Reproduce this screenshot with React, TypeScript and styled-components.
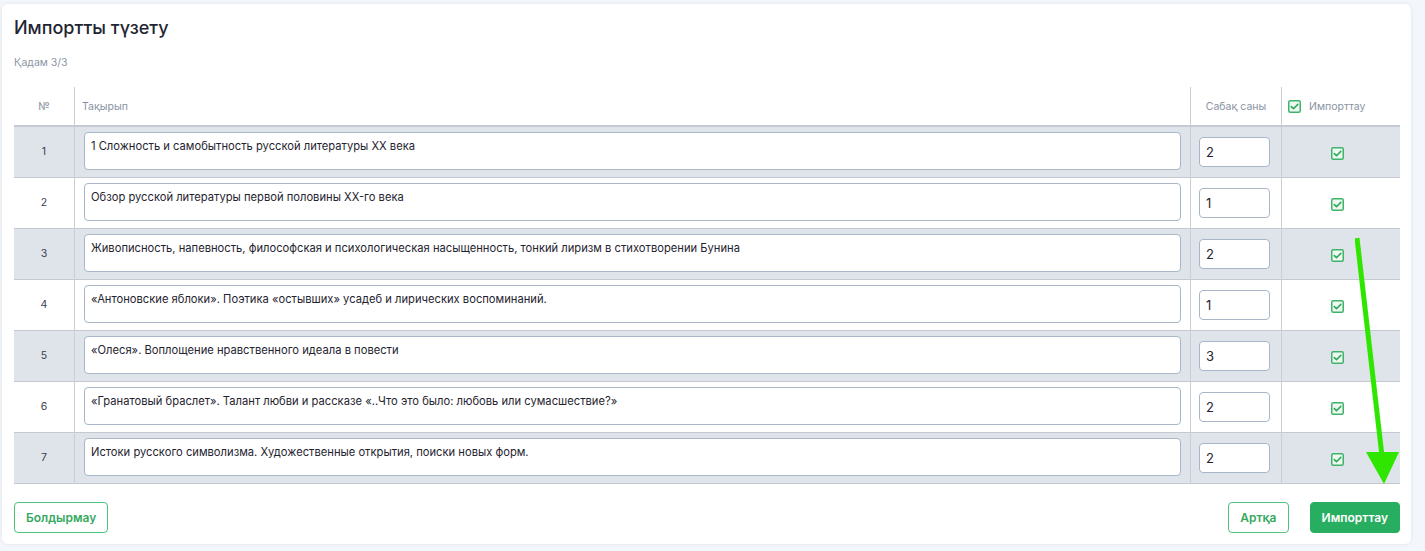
import { useState } from "react";
import { styled, createGlobalStyle } from "styled-components";

interface Lesson {
  id: number;
  title: string;
  hours: string;
  checked: boolean;
}

const initialLessons: Lesson[] = [
  { id: 1, title: "1 Сложность и самобытность русской литературы XX века", hours: "2", checked: true },
  { id: 2, title: "Обзор русской литературы первой половины XX-го века", hours: "1", checked: true },
  {
    id: 3,
    title:
      "Живописность, напевность, философская и психологическая насыщенность, тонкий лиризм в стихотворении Бунина",
    hours: "2",
    checked: true,
  },
  {
    id: 4,
    title: "«Антоновские яблоки». Поэтика «остывших» усадеб и лирических воспоминаний.",
    hours: "1",
    checked: true,
  },
  { id: 5, title: "«Олеся». Воплощение нравственного идеала в повести", hours: "3", checked: true },
  {
    id: 6,
    title: "«Гранатовый браслет». Талант любви и рассказе «..Что это было: любовь или сумасшествие?»",
    hours: "2",
    checked: true,
  },
  {
    id: 7,
    title: "Истоки русского символизма. Художественные открытия, поиски новых форм.",
    hours: "2",
    checked: true,
  },
];

const CheckIcon = () => (
  <svg width="13" height="13" viewBox="0 0 13 13">
    <rect x="0.75" y="0.75" width="11.5" height="11.5" rx="1.5" fill="#eef8f1" stroke="#3fb36b" strokeWidth="1.5" />
    <path d="M3.3 6.6 L5.5 8.7 L9.8 4.4" fill="none" stroke="#2faa5c" strokeWidth="1.6" strokeLinecap="round" strokeLinejoin="round" />
  </svg>
);

export default function App() {
  const [lessons, setLessons] = useState(initialLessons);

  const toggle = (id: number) =>
    setLessons((prev) => prev.map((l) => (l.id === id ? { ...l, checked: !l.checked } : l)));

  return (
    <>
      <GlobalStyle />
      <Page>
        <Card>
          <Title>Импортты түзету</Title>
          <Divider />
          <Step>Қадам 3/3</Step>

          <Table>
            <thead>
              <tr>
                <HeadCell $align="center" $width={46}>№</HeadCell>
                <HeadCell>Тақырып</HeadCell>
                <HeadCell $align="center" $width={76}>Сабақ саны</HeadCell>
                <HeadCell $width={104}>
                  <HeadCheck>
                    <CheckIcon />
                    <span>Импорттау</span>
                  </HeadCheck>
                </HeadCell>
              </tr>
            </thead>
            <tbody>
              {lessons.map((lesson, i) => (
                <Row key={`lesson-${lesson.id}`} $striped={i % 2 === 0}>
                  <NumCell>{lesson.id}</NumCell>
                  <TitleCell>
                    <TitleInput value={lesson.title} readOnly />
                  </TitleCell>
                  <HoursCell>
                    <HoursInput value={lesson.hours} readOnly />
                  </HoursCell>
                  <CheckCell onClick={() => toggle(lesson.id)}>
                    {lesson.checked && <CheckIcon />}
                  </CheckCell>
                </Row>
              ))}
            </tbody>
          </Table>

          <Footer>
            <OutlineButton>Болдырмау</OutlineButton>
            <FooterRight>
              <OutlineButton>Артқа</OutlineButton>
              <PrimaryButton>Импорттау</PrimaryButton>
            </FooterRight>
          </Footer>

          <Arrow width="60" height="260" viewBox="0 0 60 260">
            <line x1="2" y1="2" x2="27" y2="220" stroke="#2ee600" strokeWidth="5" />
            <polygon points="11,216 44,216 29,248" fill="#2ee600" />
          </Arrow>
        </Card>
      </Page>
    </>
  );
}

const GlobalStyle = createGlobalStyle`
  html, body {
    margin: 0;
    padding: 0;
    background: #f3f6fa;
    font-family: Inter, "Noto Sans", "DejaVu Sans", sans-serif;
  }
`;

const Page = styled.div`
  width: 1425px;
  height: 551px;
  padding: 4px 14px 7px 2px;
  box-sizing: border-box;
`;

const Card = styled.div`
  position: relative;
  height: 100%;
  box-sizing: border-box;
  background: #ffffff;
  border-radius: 6px;
  box-shadow: 0 0 4px rgba(30, 50, 90, 0.08);
  padding: 13px 11px 12px 12px;
  display: flex;
  flex-direction: column;
`;

const Title = styled.h1`
  margin: 0;
  font-size: 18px;
  font-weight: 500;
  color: #1f2532;
  line-height: 21px;
`;

const Divider = styled.div`
  height: 1px;
  background: #cfd5dc;
  margin-top: 11px;
`;

const Step = styled.div`
  margin-top: 7px;
  font-size: 10.5px;
  color: #8c95a3;
  line-height: 13px;
`;

const Table = styled.table`
  width: 100%;
  margin-top: 18px;
  border-collapse: collapse;
  table-layout: fixed;
`;

const HeadCell = styled.th<{ $align?: string; $width?: number }>`
  height: 38px;
  padding: 0 7px;
  text-align: ${(p) => p.$align ?? "left"};
  width: ${(p) => (p.$width ? `${p.$width}px` : "auto")};
  font-size: 10.5px;
  font-weight: 400;
  color: #8a93a3;
  border-bottom: 2px solid #c6cbd3;
  border-left: 1px solid #c9cfd7;

  &:first-child {
    border-left: none;
  }
`;

const HeadCheck = styled.div`
  display: flex;
  align-items: center;
  gap: 8px;

  & svg {
    margin-left: -1px;
  }
`;

const Row = styled.tr<{ $striped: boolean }>`
  height: 51px;
  background: ${(p) => (p.$striped ? "#dfe3ea" : "#ffffff")};
  border-bottom: 1px solid #c4c9d1;

  & > td {
    border-left: 1px solid #c9cfd7;
  }

  & > td:first-child {
    border-left: none;
  }
`;

const NumCell = styled.td`
  text-align: center;
  font-size: 10.5px;
  color: #3a4150;
`;

const TitleCell = styled.td`
  padding: 5px 9px 5px 9px;
  vertical-align: top;
`;

const TitleInput = styled.textarea`
  display: block;
  width: 100%;
  box-sizing: border-box;
  height: 38px;
  resize: none;
  border: 1px solid #a8b6c8;
  border-radius: 4px;
  background: #ffffff;
  padding: 6px 6px;
  font-family: Inter, "Noto Sans", sans-serif;
  font-size: 11.2px;
  line-height: 14px;
  color: #1f2430;
  outline: none;
  overflow: hidden;
`;

const HoursCell = styled.td`
  padding: 0 10px 0 8px;
`;

const HoursInput = styled.input`
  display: block;
  width: 71px;
  height: 30px;
  box-sizing: border-box;
  border: 1px solid #a8b6c8;
  border-radius: 4px;
  background: #ffffff;
  padding: 0 6px;
  font-family: Inter, "Noto Sans", sans-serif;
  font-size: 13px;
  color: #1f2430;
  outline: none;
`;

const CheckCell = styled.td`
  text-align: center;
  padding-right: 9px;
  cursor: pointer;

  & svg {
    display: inline-block;
    vertical-align: middle;
  }
`;

const Footer = styled.div`
  margin-top: 18px;
  display: flex;
  justify-content: space-between;
  align-items: center;
`;

const FooterRight = styled.div`
  display: flex;
  gap: 21px;
`;

const OutlineButton = styled.button`
  height: 31px;
  padding: 0 11px;
  border: 1px solid #4fc27c;
  border-radius: 4px;
  background: #ffffff;
  color: #36a95f;
  font-family: Inter, "Noto Sans", sans-serif;
  font-size: 12px;
  font-weight: 600;
  cursor: pointer;
`;

const PrimaryButton = styled.button`
  height: 31px;
  padding: 0 11px;
  border: 1px solid #27ae60;
  border-radius: 4px;
  background: #27ae60;
  color: #ffffff;
  font-family: Inter, "Noto Sans", sans-serif;
  font-size: 12px;
  font-weight: 600;
  cursor: pointer;
`;

const Arrow = styled.svg`
  position: absolute;
  left: 1353px;
  top: 232px;
  pointer-events: none;
`;
